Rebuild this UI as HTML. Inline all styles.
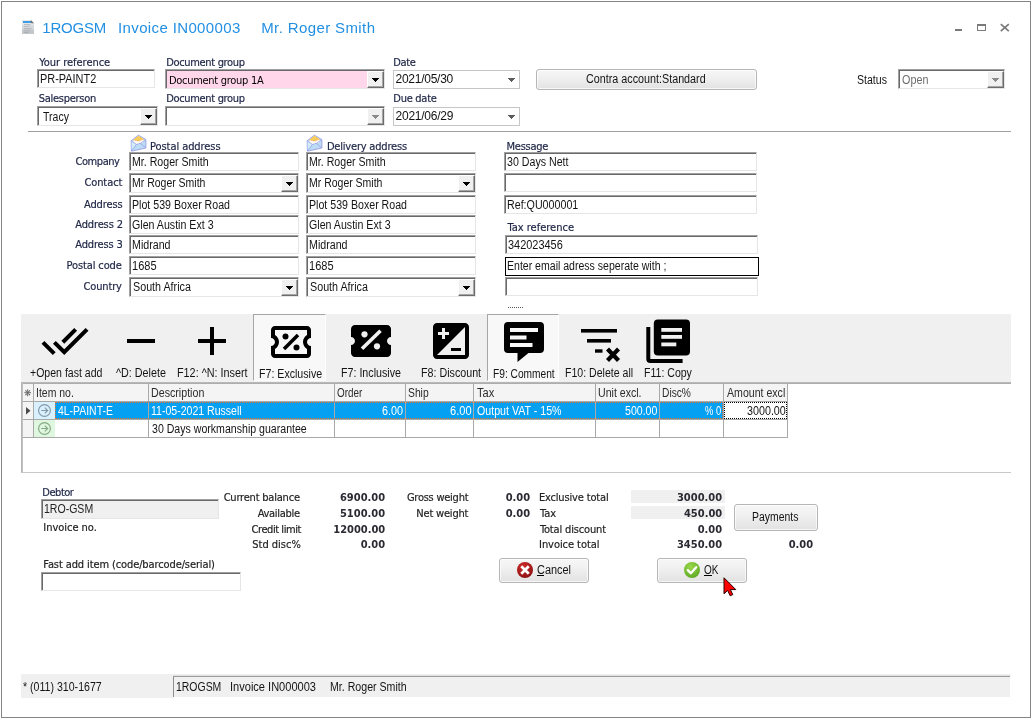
<!DOCTYPE html><html lang="en"><head><meta charset="utf-8"><title>Invoice IN000003</title><style>

html,body{margin:0;padding:0;background:#fff;overflow:hidden}
body{width:1032px;height:719px;position:relative}
.abs,.tx,.ed,.ddb,.dt,.btn{position:absolute}
.win{position:absolute;left:1px;top:1px;width:1030px;height:717px;box-sizing:border-box;border:1px solid #848484;background:#fff}
.tx{white-space:pre;line-height:1;color:#141414}
#txt{position:absolute;left:0;top:0;width:1032px;height:719px;will-change:transform}
.ft{font:11px "DejaVu Sans Condensed","DejaVu Sans","Liberation Sans",sans-serif;-webkit-text-stroke:0.18px currentColor}.fb{font:bold 11px "DejaVu Sans Condensed","DejaVu Sans","Liberation Sans",sans-serif}.fd{font:12px "Liberation Sans",sans-serif}.fv{font:11px "DejaVu Sans Condensed","DejaVu Sans","Liberation Sans",sans-serif}.fm{font:12px "Liberation Sans",sans-serif}.fh{font:15px "Liberation Sans",sans-serif}
.ed{box-sizing:border-box;border-top:1px solid #a0a0a0;border-left:1px solid #a0a0a0;border-right:1px solid #e6e6e6;border-bottom:1px solid #e6e6e6}
.ed:after{content:"";position:absolute;left:0;top:0;right:0;bottom:0;border-top:1px solid #696969;border-left:1px solid #696969}
.ddb{width:17px;box-sizing:border-box;background:#f0f0f0;border-top:1px solid #fff;border-left:1px solid #fff;border-right:1px solid #6c6c6c;border-bottom:1px solid #6c6c6c;box-shadow:inset -1px -1px 0 #a6a6a6}
.ddb i{position:absolute;left:4px;top:50%;margin-top:-2.500px;width:0;height:0;border-left:3.500px solid transparent;border-right:3.500px solid transparent;border-top:4px solid #000}
.dt{box-sizing:border-box;border:1px solid #c6c6c6;background:#fff}
.dt i{position:absolute;right:5px;top:7px;width:0;height:0;border-left:3.500px solid transparent;border-right:3.500px solid transparent;border-top:4px solid #555}
.btn{box-sizing:border-box;border:1px solid #b6b6b6;border-radius:3px;background:linear-gradient(#f7f7f7,#efefef 45%,#e2e2e2);box-shadow:inset 0 0 0 1px rgba(255,255,255,.7)}
.pressed{box-sizing:border-box;background:#f8f8f8;border-top:1px solid #a6a6a6;border-left:1px solid #a6a6a6;border-right:1px solid #fff;border-bottom:1px solid #fff}

</style></head><body>
<div class="win"></div>
<svg class="abs" style="left:22px;top:20px" width="12" height="14" viewBox="0 0 12 14">
<path d="M0 0H9L12 3V14H0Z" fill="#e6e7e8"/><path d="M0 5H12V14H0Z" fill="#d6d8da"/><path d="M0 9.500H12V14H0Z" fill="#c4c7ca"/>
<rect x="1" y="1" width="8.500" height="2" fill="#3d9ee8"/><path d="M8.800 0L12 3.200H9.500L8.800 2.500Z" fill="#6e7276"/>
<rect x="2" y="4.200" width="6.500" height="0.800" fill="#aeb4ba"/><rect x="2" y="6" width="5.500" height="0.800" fill="#b4bac0"/><rect x="2" y="8.300" width="7.500" height="0.900" fill="#a9b0b7"/><rect x="2" y="10.500" width="6" height="0.800" fill="#aab1b8"/><rect x="2" y="12" width="4.500" height="0.800" fill="#a4abb2"/>
</svg>
<div class="abs" style="left:955px;top:29px;width:7px;height:2px;background:#7a7a7a"></div>
<div class="abs" style="left:977px;top:24px;width:9px;height:7px;box-sizing:border-box;border:1px solid #7a7a7a;border-top-width:2px"></div>
<svg class="abs" style="left:1000px;top:23px" width="10" height="9" viewBox="0 0 10 9"><path d="M0.800 1.200L8.800 8.200M8.800 1.200L0.800 8.200" stroke="#7a7a7a" stroke-width="1.700" fill="none"/></svg>
<div class="ed" style="left:37px;top:69px;width:118px;height:19px;background:#fff"></div>
<div class="ed" style="left:165px;top:69px;width:220px;height:20px;background:#ffd6ea"></div>
<div class="ddb" style="left:367px;top:71px;height:17px"><svg width="7" height="4" viewBox="0 0 7 4" shape-rendering="crispEdges" style="position:absolute;left:4px;top:6px"><path d="M0 0h7v1h-1v1h-1v1h-1v1h-1v-1h-1v-1h-1v-1h-1z" fill="#000"/></svg></div>
<div class="dt" style="left:393px;top:70px;width:127px;height:19px"><svg width="7" height="4" viewBox="0 0 7 4" shape-rendering="crispEdges" style="position:absolute;left:114px;top:7px"><path d="M0 0h7v1h-1v1h-1v1h-1v1h-1v-1h-1v-1h-1v-1h-1z" fill="#5c5c5c"/></svg></div>
<div class="btn" style="left:536px;top:69px;width:221px;height:21px"></div>
<div class="ed" style="left:898px;top:69px;width:107px;height:20px;background:#fff"></div>
<div class="ddb" style="left:987px;top:71px;height:17px"><svg width="7" height="4" viewBox="0 0 7 4" shape-rendering="crispEdges" style="position:absolute;left:4px;top:6px"><path d="M0 0h7v1h-1v1h-1v1h-1v1h-1v-1h-1v-1h-1v-1h-1z" fill="#8a8a8a"/></svg></div>
<div class="ed" style="left:37px;top:106px;width:121px;height:20px;background:#fff"></div>
<div class="ddb" style="left:140px;top:108px;height:17px"><svg width="7" height="4" viewBox="0 0 7 4" shape-rendering="crispEdges" style="position:absolute;left:4px;top:6px"><path d="M0 0h7v1h-1v1h-1v1h-1v1h-1v-1h-1v-1h-1v-1h-1z" fill="#000"/></svg></div>
<div class="ed" style="left:165px;top:106px;width:220px;height:20px;background:#fff"></div>
<div class="ddb" style="left:367px;top:108px;height:17px"><svg width="7" height="4" viewBox="0 0 7 4" shape-rendering="crispEdges" style="position:absolute;left:4px;top:6px"><path d="M0 0h7v1h-1v1h-1v1h-1v1h-1v-1h-1v-1h-1v-1h-1z" fill="#8a8a8a"/></svg></div>
<div class="dt" style="left:393px;top:107px;width:127px;height:19px"><svg width="7" height="4" viewBox="0 0 7 4" shape-rendering="crispEdges" style="position:absolute;left:114px;top:7px"><path d="M0 0h7v1h-1v1h-1v1h-1v1h-1v-1h-1v-1h-1v-1h-1z" fill="#5c5c5c"/></svg></div>
<div class="abs" style="left:28px;top:131px;width:983px;height:1px;background:#a0a0a0"></div>
<svg class="abs" style="left:130px;top:134px" width="18" height="19" viewBox="0 0 18 19">
<path d="M1.200 6.700L8.400 1.200L15.900 5.600V14L1.400 17.200Z" fill="#bcdcf6" stroke="#989ce4" stroke-width="0.900" stroke-linejoin="round"/>
<path d="M1.600 7.200L6.400 10.400L1.800 16.500Z" fill="#d3eefa"/><path d="M3.300 6L8.400 1.900L13.900 5.400L13.200 8.500L8 10.200L3.800 9.300Z" fill="#fffdf6"/>
<path d="M3.300 5.900L8.400 1.800L13.900 5.300L8.600 6.900Z" fill="#f7cd58"/>
<path d="M3.300 5.900L8.600 7L13.900 5.300" fill="none" stroke="#f0a060" stroke-width="0.500"/>
<path d="M1.300 7L6.400 10.400L8.300 9.900L10.300 9.300L15.800 5.900M1.600 16.900L6.400 10.400M15.700 13.800L10.300 9.300" stroke="#9aa0e2" stroke-width="0.800" fill="none"/>
</svg>
<svg class="abs" style="left:306px;top:134px" width="18" height="19" viewBox="0 0 18 19">
<path d="M1.200 6.700L8.400 1.200L15.900 5.600V14L1.400 17.200Z" fill="#bcdcf6" stroke="#989ce4" stroke-width="0.900" stroke-linejoin="round"/>
<path d="M1.600 7.200L6.400 10.400L1.800 16.500Z" fill="#d3eefa"/><path d="M3.300 6L8.400 1.900L13.900 5.400L13.200 8.500L8 10.200L3.800 9.300Z" fill="#fffdf6"/>
<path d="M3.300 5.900L8.400 1.800L13.900 5.300L8.600 6.900Z" fill="#f7cd58"/>
<path d="M3.300 5.900L8.600 7L13.900 5.300" fill="none" stroke="#f0a060" stroke-width="0.500"/>
<path d="M1.300 7L6.400 10.400L8.300 9.900L10.300 9.300L15.800 5.900M1.600 16.900L6.400 10.400M15.700 13.800L10.300 9.300" stroke="#9aa0e2" stroke-width="0.800" fill="none"/>
</svg>
<div class="ed" style="left:129px;top:152px;width:170px;height:19px;background:#fff"></div>
<div class="ed" style="left:306px;top:152px;width:170px;height:19px;background:#fff"></div>
<div class="ed" style="left:129px;top:173px;width:170px;height:20px;background:#fff"></div>
<div class="ddb" style="left:281px;top:175px;height:17px"><svg width="7" height="4" viewBox="0 0 7 4" shape-rendering="crispEdges" style="position:absolute;left:4px;top:6px"><path d="M0 0h7v1h-1v1h-1v1h-1v1h-1v-1h-1v-1h-1v-1h-1z" fill="#000"/></svg></div>
<div class="ed" style="left:306px;top:173px;width:170px;height:20px;background:#fff"></div>
<div class="ddb" style="left:458px;top:175px;height:17px"><svg width="7" height="4" viewBox="0 0 7 4" shape-rendering="crispEdges" style="position:absolute;left:4px;top:6px"><path d="M0 0h7v1h-1v1h-1v1h-1v1h-1v-1h-1v-1h-1v-1h-1z" fill="#000"/></svg></div>
<div class="ed" style="left:129px;top:195px;width:170px;height:19px;background:#fff"></div>
<div class="ed" style="left:306px;top:195px;width:170px;height:19px;background:#fff"></div>
<div class="ed" style="left:129px;top:215px;width:170px;height:19px;background:#fff"></div>
<div class="ed" style="left:306px;top:215px;width:170px;height:19px;background:#fff"></div>
<div class="ed" style="left:129px;top:235px;width:170px;height:19px;background:#fff"></div>
<div class="ed" style="left:306px;top:235px;width:170px;height:19px;background:#fff"></div>
<div class="ed" style="left:129px;top:256px;width:170px;height:19px;background:#fff"></div>
<div class="ed" style="left:306px;top:256px;width:170px;height:19px;background:#fff"></div>
<div class="ed" style="left:129px;top:277px;width:170px;height:20px;background:#fff"></div>
<div class="ddb" style="left:281px;top:279px;height:17px"><svg width="7" height="4" viewBox="0 0 7 4" shape-rendering="crispEdges" style="position:absolute;left:4px;top:6px"><path d="M0 0h7v1h-1v1h-1v1h-1v1h-1v-1h-1v-1h-1v-1h-1z" fill="#000"/></svg></div>
<div class="ed" style="left:306px;top:277px;width:170px;height:20px;background:#fff"></div>
<div class="ddb" style="left:458px;top:279px;height:17px"><svg width="7" height="4" viewBox="0 0 7 4" shape-rendering="crispEdges" style="position:absolute;left:4px;top:6px"><path d="M0 0h7v1h-1v1h-1v1h-1v1h-1v-1h-1v-1h-1v-1h-1z" fill="#000"/></svg></div>
<div class="ed" style="left:504px;top:152px;width:253px;height:19px;background:#fff"></div>
<div class="ed" style="left:504px;top:173px;width:253px;height:19px;background:#fff"></div>
<div class="ed" style="left:504px;top:195px;width:253px;height:19px;background:#fff"></div>
<div class="ed" style="left:505px;top:235px;width:253px;height:19px;background:#fff"></div>
<div class="abs" style="left:505px;top:257px;width:254px;height:19px;box-sizing:border-box;border:1px solid #000;background:#fff"></div>
<div class="ed" style="left:505px;top:277px;width:253px;height:19px;background:#fff"></div>
<div class="abs" style="left:508px;top:307px;width:16px;height:1px;background:repeating-linear-gradient(90deg,#555 0 1px,transparent 1px 2px)"></div>
<div class="abs" style="left:21px;top:314px;width:990px;height:69px;background:#f0f0f0"></div>
<div class="abs pressed" style="left:253px;top:314px;width:73px;height:67px"></div>
<div class="abs pressed" style="left:487px;top:314px;width:72px;height:67px"></div>
<svg class="abs" style="left:0;top:0" width="1032" height="400" viewBox="0 0 1032 400">
<g transform="translate(40.7,316.7) scale(2.02)"><path d="M18 7l-1.410-1.410-6.340 6.340 1.410 1.410L18 7zm4.240-1.410L11.660 16.170 7.480 12l-1.410 1.410L11.660 19l12-12-1.420-1.410zM.410 13.410L6 19l1.410-1.410L1.830 12 .410 13.410z" fill="#000"/></g>
<rect x="127" y="339" width="28" height="4" fill="#000"/>
<rect x="198" y="339" width="28" height="4" fill="#000"/><rect x="210" y="327" width="4" height="28" fill="#000"/>
<!-- exclusive (outlined ticket) -->
<g transform="translate(267,318)">
<path d="M44 20V12c0-2.2-1.8-4-4-4H8c-2.2 0-4 1.8-4 4v8c2.2 0 4 1.8 4 4s-1.8 4-4 4v8c0 2.2 1.8 4 4 4h32c2.200 0 4-1.800 4-4v-8c-2.200 0-4-1.800-4-4s1.800-4 4-4z" fill="#000"/>
<path d="M40 17.100V12H8v5.100c2.400 1.400 4 4 4 6.900s-1.600 5.500-4 6.900V36h32v-5.100c-2.400-1.400-4-4-4-6.900s1.600-5.500 4-6.900z" fill="#f8f8f8"/>
<circle cx="18.500" cy="18.500" r="3" fill="#000"/><circle cx="29.500" cy="29.500" r="3" fill="#000"/>
<path d="M17 31L31 17" stroke="#000" stroke-width="3.6"/>
</g>
<!-- inclusive (filled ticket) -->
<g transform="translate(347,317)">
<path d="M44 20V12c0-2.200-1.800-4-4-4H8c-2.200 0-4 1.800-4 4v8c2.200 0 4 1.800 4 4s-1.800 4-4 4v8c0 2.200 1.800 4 4 4h32c2.200 0 4-1.800 4-4v-8c-2.200 0-4-1.800-4-4s1.800-4 4-4z" fill="#000"/>
<circle cx="17.500" cy="17.300" r="3.100" fill="#f0f0f0"/><circle cx="30" cy="29.300" r="3.100" fill="#f0f0f0"/>
<path d="M15 31.800L33.500 13.700" stroke="#f0f0f0" stroke-width="3.600"/>
</g>
<!-- discount (iso) -->
<g transform="translate(427,317) scale(2)">
<path d="M19 3H5c-1.100 0-2 .900-2 2v14c0 1.100.900 2 2 2h14c1.100 0 2-.900 2-2V5c0-1.100-.900-2-2-2zM5.500 7.500h2v-2H9v2h2V9H9v2H7.500V9h-2V7.500zM19 19H5L19 5v14zm-2-2v-1.500h-5V17h5z" fill="#000"/>
</g>
<!-- comment -->
<g transform="translate(1,1)">
<path d="M507 321h32a4 4 0 0 1 4 4v23a4 4 0 0 1-4 4h-11.500l-11 9v-9H507a4 4 0 0 1-4-4v-23a4 4 0 0 1 4-4z" fill="#000"/>
<rect x="509" y="327" width="28" height="4" fill="#f8f8f8"/><rect x="509" y="334.500" width="16.500" height="4" fill="#f8f8f8"/><rect x="509" y="342" width="22.500" height="4" fill="#f8f8f8"/>
</g>
<!-- delete all -->
<rect x="581" y="329" width="36" height="3.600" fill="#000"/><rect x="587" y="339" width="24" height="3.600" fill="#000"/><rect x="595" y="349.300" width="7.500" height="3.400" fill="#000"/>
<path d="M607.500 349L618.500 360.500M618.500 349L607.500 360.500" stroke="#000" stroke-width="4.200" fill="none"/>
<!-- copy -->
<path d="M646.300 327h4v32h32.300v4H650.300a4 4 0 0 1-4-4z" fill="#000"/>
<rect x="653.800" y="319.500" width="36.200" height="36" rx="4" fill="#000"/>
<rect x="661.300" y="328" width="20.700" height="3.800" fill="#f0f0f0"/><rect x="661.300" y="335" width="20.700" height="3.800" fill="#f0f0f0"/><rect x="661.300" y="342.500" width="15" height="3.800" fill="#f0f0f0"/>
</svg>
<div class="abs" style="left:21px;top:382px;width:990px;height:91px;box-sizing:border-box;border-top:1px solid #b8b8b8;border-left:1px solid #b4b4b4;border-bottom:1px solid #c8c8c8;background:#fff"></div>
<div class="abs" style="left:22px;top:383px;width:989px;height:1px;background:#adadad"></div>
<div class="abs" style="left:22px;top:383px;width:1px;height:89px;background:#c0c0c0"></div>
<div class="abs" style="left:23px;top:384px;width:765px;height:17px;background:#f4f4f4"></div>
<div class="abs" style="left:23px;top:401px;width:11px;height:36px;background:#f4f4f4"></div>
<div class="abs" style="left:33px;top:384px;width:1px;height:54px;background:#a9a9a9"></div>
<div class="abs" style="left:148px;top:384px;width:1px;height:54px;background:#a9a9a9"></div>
<div class="abs" style="left:334px;top:384px;width:1px;height:54px;background:#a9a9a9"></div>
<div class="abs" style="left:405px;top:384px;width:1px;height:54px;background:#a9a9a9"></div>
<div class="abs" style="left:473px;top:384px;width:1px;height:54px;background:#a9a9a9"></div>
<div class="abs" style="left:595px;top:384px;width:1px;height:54px;background:#a9a9a9"></div>
<div class="abs" style="left:659px;top:384px;width:1px;height:54px;background:#a9a9a9"></div>
<div class="abs" style="left:723px;top:384px;width:1px;height:54px;background:#a9a9a9"></div>
<div class="abs" style="left:787px;top:384px;width:1px;height:54px;background:#a9a9a9"></div>
<div class="abs" style="left:23px;top:401px;width:765px;height:1px;background:#a9a9a9"></div>
<div class="abs" style="left:23px;top:419px;width:765px;height:1px;background:#a9a9a9"></div>
<div class="abs" style="left:23px;top:437px;width:765px;height:1px;background:#a9a9a9"></div>
<div class="abs" style="left:34px;top:402px;width:21px;height:17px;background:#d9f0ff"></div>
<div class="abs" style="left:34px;top:420px;width:21px;height:17px;background:#dff7df"></div>
<div class="abs" style="left:55px;top:402px;width:93px;height:17px;background:#06a0f3"></div>
<div class="abs" style="left:149px;top:402px;width:185px;height:17px;background:#06a0f3"></div>
<div class="abs" style="left:335px;top:402px;width:70px;height:17px;background:#06a0f3"></div>
<div class="abs" style="left:406px;top:402px;width:67px;height:17px;background:#06a0f3"></div>
<div class="abs" style="left:474px;top:402px;width:121px;height:17px;background:#06a0f3"></div>
<div class="abs" style="left:596px;top:402px;width:63px;height:17px;background:#06a0f3"></div>
<div class="abs" style="left:660px;top:402px;width:63px;height:17px;background:#06a0f3"></div>
<div class="abs" style="left:55px;top:402px;width:668px;height:17px;box-sizing:border-box;border:1px dotted #e8712a;pointer-events:none"></div>
<div class="abs" style="left:724px;top:402px;width:63px;height:17px;box-sizing:border-box;border:1px dotted #000"></div>
<svg class="abs" style="left:26px;top:407px" width="5" height="8" viewBox="0 0 5 8"><path d="M0 0L4.500 3.800L0 7.600Z" fill="#4a4a4a"/></svg>
<svg class="abs" style="left:38px;top:404px" width="13" height="13" viewBox="0 0 13 13"><circle cx="6.500" cy="6.500" r="5.900" fill="none" stroke="#8497a6" stroke-width="1.150"/><path d="M3.300 6.500H9.500M6.800 3.600L9.700 6.500L6.800 9.400" fill="none" stroke="#8497a6" stroke-width="1.150"/></svg>
<svg class="abs" style="left:38px;top:422px" width="13" height="13" viewBox="0 0 13 13"><circle cx="6.500" cy="6.500" r="5.900" fill="none" stroke="#86a886" stroke-width="1.150"/><path d="M3.300 6.500H9.500M6.800 3.600L9.700 6.500L6.800 9.400" fill="none" stroke="#86a886" stroke-width="1.150"/></svg>
<div class="ed" style="left:41px;top:499px;width:178px;height:20px;background:#f0f0f0"></div>
<div class="ed" style="left:41px;top:572px;width:200px;height:19px;background:#fff"></div>
<div class="abs" style="left:631px;top:490px;width:94px;height:13px;background:#f0f0f0"></div>
<div class="abs" style="left:631px;top:506px;width:94px;height:13px;background:#f0f0f0"></div>
<div class="btn" style="left:734px;top:504px;width:84px;height:27px"></div>
<div class="btn" style="left:499px;top:558px;width:90px;height:25px"></div>
<div class="btn" style="left:657px;top:558px;width:90px;height:25px"></div>
<div class="abs" style="left:517px;top:562px;width:16px;height:16px;border-radius:50%;background:radial-gradient(circle at 40% 30%,#d02a2a,#7c0b0e)"></div>
<svg class="abs" style="left:516px;top:561px" width="18" height="18" viewBox="0 0 18 18"><path d="M6.200 6.200L11.800 11.800M11.800 6.200L6.200 11.800" stroke="#fff" stroke-width="2.700" stroke-linecap="square"/></svg>
<div class="abs" style="left:684px;top:562px;width:16px;height:16px;border-radius:50%;background:radial-gradient(circle at 40% 30%,#9ad84a,#4e9d1c)"></div>
<svg class="abs" style="left:683px;top:561px" width="18" height="18" viewBox="0 0 18 18"><path d="M4.800 9.200L7.800 12.200L13.200 6.200" stroke="#fff" stroke-width="2.400" fill="none" stroke-linecap="round" stroke-linejoin="round"/></svg>
<div class="abs" style="left:537px;top:575px;width:7px;height:1px;background:#000"></div>
<div class="abs" style="left:704px;top:575px;width:8px;height:1px;background:#000"></div>
<svg class="abs" style="left:723px;top:577px" width="14" height="21" viewBox="0 0 14 21"><path d="M1 0.800V16.800L4.600 13.400L7.200 18.800L9.800 17.600L7.300 12.600H12.800Z" fill="#f00" stroke="#2a0000" stroke-width="1" stroke-linejoin="round"/></svg>
<div class="abs" style="left:21px;top:674px;width:990px;height:2px;background:#f0f0f0"></div>
<div class="abs" style="left:21px;top:674px;width:152px;height:24px;background:#f0f0f0"></div>
<div class="abs" style="left:173px;top:675px;width:837px;height:1px;background:#e2e2e2"></div>
<div class="abs" style="left:173px;top:676px;width:837px;height:21px;box-sizing:border-box;border-top:1px solid #9c9c9c;border-left:1px solid #8e8e8e;background:#f0f0f0"></div>
<div id="txt">
<span id="t0" class="tx fh" style="top:19.00px;left:42.32px;letter-spacing:-0.227px;color:#2390e2;">1ROGSM</span>
<span id="t1" class="tx fh" style="top:19.00px;left:118.06px;letter-spacing:0.366px;color:#2390e2;">Invoice IN000003</span>
<span id="t2" class="tx fh" style="top:19.00px;left:261.21px;letter-spacing:0.387px;color:#2390e2;">Mr. Roger Smith</span>
<span id="t3" class="tx ft" style="top:56.00px;left:39.19px;letter-spacing:-0.023px;color:#212847;">Your reference</span>
<span id="t4" class="tx ft" style="top:56.00px;left:166.22px;letter-spacing:-0.331px;color:#212847;">Document group</span>
<span id="t5" class="tx ft" style="top:56.00px;left:393.27px;letter-spacing:-0.351px;color:#212847;">Date</span>
<span id="t6" class="tx fm" style="top:72.00px;left:39.85px;transform:scaleX(0.9104);transform-origin:left top;">PR-PAINT2</span>
<span id="t7" class="tx fv" style="top:74.00px;left:168.95px;letter-spacing:-0.289px;color:#000;">Document group 1A</span>
<span id="t8" class="tx fd" style="top:72.00px;left:395.51px;letter-spacing:-0.254px;color:#111;">2021/05/30</span>
<span id="t9" class="tx fm" style="top:72.00px;left:586.44px;transform:scaleX(0.8969);transform-origin:left top;">Contra account:Standard</span>
<span id="t10" class="tx fm" style="top:73.00px;left:856.95px;transform:scaleX(0.8798);transform-origin:left top;">Status</span>
<span id="t11" class="tx fm" style="top:73.00px;left:901.96px;transform:scaleX(0.8986);transform-origin:left top;color:#6d6d6d;">Open</span>
<span id="t12" class="tx ft" style="top:92.00px;left:38.81px;letter-spacing:-0.281px;color:#212847;">Salesperson</span>
<span id="t13" class="tx ft" style="top:92.00px;left:166.22px;letter-spacing:-0.331px;color:#212847;">Document group</span>
<span id="t14" class="tx ft" style="top:92.00px;left:393.34px;letter-spacing:-0.275px;color:#212847;">Due date</span>
<span id="t15" class="tx fm" style="top:110.00px;left:42.53px;transform:scaleX(0.8760);transform-origin:left top;">Tracy</span>
<span id="t16" class="tx fd" style="top:109.00px;left:395.51px;letter-spacing:-0.232px;color:#111;">2021/06/29</span>
<span id="t17" class="tx ft" style="top:140.00px;left:150.05px;letter-spacing:-0.071px;color:#212847;">Postal address</span>
<span id="t18" class="tx ft" style="top:140.00px;left:326.90px;letter-spacing:-0.193px;color:#212847;">Delivery address</span>
<span id="t19" class="tx ft" style="top:140.00px;left:506.62px;letter-spacing:-0.279px;color:#212847;">Message</span>
<span id="t20" class="tx ft" style="top:155.00px;left:75.51px;letter-spacing:-0.436px;color:#212847;">Company</span>
<span id="t21" class="tx fm" style="top:155.00px;left:132.05px;transform:scaleX(0.8840);transform-origin:left top;">Mr. Roger Smith</span>
<span id="t22" class="tx fm" style="top:155.00px;left:309.05px;transform:scaleX(0.8840);transform-origin:left top;">Mr. Roger Smith</span>
<span id="t23" class="tx ft" style="top:176.00px;left:84.40px;letter-spacing:-0.089px;color:#212847;">Contact</span>
<span id="t24" class="tx fm" style="top:176.00px;left:132.20px;transform:scaleX(0.8738);transform-origin:left top;">Mr Roger Smith</span>
<span id="t25" class="tx fm" style="top:176.00px;left:309.20px;transform:scaleX(0.8738);transform-origin:left top;">Mr Roger Smith</span>
<span id="t26" class="tx ft" style="top:198.00px;left:83.95px;letter-spacing:-0.108px;color:#212847;">Address</span>
<span id="t27" class="tx fm" style="top:198.00px;left:132.20px;transform:scaleX(0.8850);transform-origin:left top;">Plot 539 Boxer Road</span>
<span id="t28" class="tx fm" style="top:198.00px;left:309.20px;transform:scaleX(0.8850);transform-origin:left top;">Plot 539 Boxer Road</span>
<span id="t29" class="tx ft" style="top:218.00px;left:75.26px;letter-spacing:-0.138px;color:#212847;">Address 2</span>
<span id="t30" class="tx fm" style="top:218.00px;left:131.84px;transform:scaleX(0.8858);transform-origin:left top;">Glen Austin Ext 3</span>
<span id="t31" class="tx fm" style="top:218.00px;left:308.84px;transform:scaleX(0.8858);transform-origin:left top;">Glen Austin Ext 3</span>
<span id="t32" class="tx ft" style="top:238.00px;left:75.29px;letter-spacing:-0.175px;color:#212847;">Address 3</span>
<span id="t33" class="tx fm" style="top:238.00px;left:131.69px;transform:scaleX(0.8882);transform-origin:left top;">Midrand</span>
<span id="t34" class="tx fm" style="top:238.00px;left:308.69px;transform:scaleX(0.8882);transform-origin:left top;">Midrand</span>
<span id="t35" class="tx ft" style="top:259.00px;left:66.62px;letter-spacing:-0.123px;color:#212847;">Postal code</span>
<span id="t36" class="tx fm" style="top:259.00px;left:131.57px;transform:scaleX(0.9185);transform-origin:left top;">1685</span>
<span id="t37" class="tx fm" style="top:259.00px;left:308.57px;transform:scaleX(0.9185);transform-origin:left top;">1685</span>
<span id="t38" class="tx ft" style="top:280.00px;left:83.51px;letter-spacing:-0.139px;color:#212847;">Country</span>
<span id="t39" class="tx fm" style="top:280.00px;left:132.91px;transform:scaleX(0.8943);transform-origin:left top;">South Africa</span>
<span id="t40" class="tx fm" style="top:280.00px;left:309.91px;transform:scaleX(0.8943);transform-origin:left top;">South Africa</span>
<span id="t41" class="tx fm" style="top:155.00px;left:506.99px;transform:scaleX(0.8867);transform-origin:left top;">30 Days Nett</span>
<span id="t42" class="tx fm" style="top:198.00px;left:506.50px;transform:scaleX(0.8902);transform-origin:left top;">Ref:QU000001</span>
<span id="t43" class="tx ft" style="top:221.00px;left:507.44px;letter-spacing:0.006px;color:#212847;">Tax reference</span>
<span id="t44" class="tx fm" style="top:238.00px;left:507.57px;transform:scaleX(0.9113);transform-origin:left top;">342023456</span>
<span id="t45" class="tx fm" style="top:259.00px;left:506.64px;transform:scaleX(0.8784);transform-origin:left top;">Enter email adress seperate with ;</span>
<span id="t46" class="tx fm" style="top:366.00px;left:29.89px;transform:scaleX(0.8794);transform-origin:left top;">+Open fast add</span>
<span id="t47" class="tx fm" style="top:366.00px;left:116.23px;transform:scaleX(0.8980);transform-origin:left top;">^D: Delete</span>
<span id="t48" class="tx fm" style="top:366.00px;left:177.05px;transform:scaleX(0.9015);transform-origin:left top;">F12: ^N: Insert</span>
<span id="t49" class="tx fm" style="top:367.00px;left:258.96px;transform:scaleX(0.8854);transform-origin:left top;">F7: Exclusive</span>
<span id="t50" class="tx fm" style="top:366.00px;left:341.26px;transform:scaleX(0.8904);transform-origin:left top;">F7: Inclusive</span>
<span id="t51" class="tx fm" style="top:366.00px;left:421.10px;transform:scaleX(0.8915);transform-origin:left top;">F8: Discount</span>
<span id="t52" class="tx fm" style="top:367.00px;left:493.01px;transform:scaleX(0.8486);transform-origin:left top;">F9: Comment</span>
<span id="t53" class="tx fm" style="top:366.00px;left:565.34px;transform:scaleX(0.8809);transform-origin:left top;">F10: Delete all</span>
<span id="t54" class="tx fm" style="top:366.00px;left:643.87px;transform:scaleX(0.8794);transform-origin:left top;">F11: Copy</span>
<span id="t55" class="tx fm" style="top:388.00px;left:23.77px;transform:scaleX(0.9783);transform-origin:left top;color:#555;font-size:9px;">❋</span>
<span id="t56" class="tx fm" style="top:386.00px;left:35.95px;transform:scaleX(0.8719);transform-origin:left top;color:#2b2b2b;">Item no.</span>
<span id="t57" class="tx fm" style="top:386.00px;left:151.25px;transform:scaleX(0.8887);transform-origin:left top;color:#2b2b2b;">Description</span>
<span id="t58" class="tx fm" style="top:386.00px;left:337.32px;transform:scaleX(0.8220);transform-origin:left top;color:#2b2b2b;">Order</span>
<span id="t59" class="tx fm" style="top:386.00px;left:408.34px;transform:scaleX(0.8598);transform-origin:left top;color:#2b2b2b;">Ship</span>
<span id="t60" class="tx fm" style="top:386.00px;left:477.40px;transform:scaleX(0.9231);transform-origin:left top;color:#2b2b2b;">Tax</span>
<span id="t61" class="tx fm" style="top:386.00px;left:597.91px;transform:scaleX(0.8824);transform-origin:left top;color:#2b2b2b;">Unit excl.</span>
<span id="t62" class="tx fm" style="top:386.00px;left:662.20px;transform:scaleX(0.8516);transform-origin:left top;color:#2b2b2b;">Disc%</span>
<span id="t63" class="tx fm" style="top:386.00px;left:726.77px;transform:scaleX(0.8820);transform-origin:left top;color:#2b2b2b;">Amount excl</span>
<span id="t64" class="tx fm" style="top:404.00px;left:58.19px;transform:scaleX(0.8695);transform-origin:left top;color:#fff;">4L-PAINT-E</span>
<span id="t65" class="tx fm" style="top:404.00px;left:151.17px;transform:scaleX(0.8787);transform-origin:left top;color:#fff;">11-05-2021 Russell</span>
<span id="t66" class="tx fm" style="top:404.00px;left:382.18px;transform:scaleX(0.9005);transform-origin:left top;color:#fff;">6.00</span>
<span id="t67" class="tx fm" style="top:404.00px;left:449.52px;transform:scaleX(0.9219);transform-origin:left top;color:#fff;">6.00</span>
<span id="t68" class="tx fm" style="top:404.00px;left:476.68px;transform:scaleX(0.8865);transform-origin:left top;color:#fff;">Output VAT - 15%</span>
<span id="t69" class="tx fm" style="top:404.00px;left:624.75px;transform:scaleX(0.8823);transform-origin:left top;color:#fff;">500.00</span>
<span id="t70" class="tx fm" style="top:404.00px;left:705.15px;transform:scaleX(0.7779);transform-origin:left top;color:#fff;">% 0</span>
<span id="t71" class="tx fm" style="top:404.00px;left:746.58px;transform:scaleX(0.8948);transform-origin:left top;">3000.00</span>
<span id="t72" class="tx fm" style="top:422.00px;left:151.98px;transform:scaleX(0.8821);transform-origin:left top;">30 Days workmanship guarantee</span>
<span id="t73" class="tx ft" style="top:486.00px;left:42.35px;letter-spacing:-0.488px;color:#212847;">Debtor</span>
<span id="t74" class="tx fm" style="top:502.00px;left:43.60px;transform:scaleX(0.8781);transform-origin:left top;color:#222;">1RO-GSM</span>
<span id="t75" class="tx ft" style="top:521.00px;left:43.26px;letter-spacing:-0.026px;color:#222;">Invoice no.</span>
<span id="t76" class="tx ft" style="top:558.00px;left:43.34px;letter-spacing:-0.111px;color:#222;">Fast add item (code/barcode/serial)</span>
<span id="t77" class="tx ft" style="top:491.00px;left:223.67px;letter-spacing:-0.207px;color:#222;">Current balance</span>
<span id="t78" class="tx ft" style="top:507.00px;left:257.69px;letter-spacing:-0.297px;color:#222;">Available</span>
<span id="t79" class="tx ft" style="top:523.00px;left:251.53px;letter-spacing:-0.436px;color:#222;">Credit limit</span>
<span id="t80" class="tx ft" style="top:538.00px;left:252.26px;letter-spacing:-0.007px;color:#222;">Std disc%</span>
<span id="t81" class="tx fb" style="top:491.00px;left:339.98px;letter-spacing:0.000px;color:#2a2a33;">6900.00</span>
<span id="t82" class="tx fb" style="top:507.00px;left:339.98px;letter-spacing:0.000px;color:#2a2a33;">5100.00</span>
<span id="t83" class="tx fb" style="top:523.00px;left:333.25px;letter-spacing:0.000px;color:#2a2a33;">12000.00</span>
<span id="t84" class="tx fb" style="top:538.00px;left:360.70px;letter-spacing:0.000px;color:#2a2a33;">0.00</span>
<span id="t85" class="tx ft" style="top:491.00px;left:406.91px;letter-spacing:-0.247px;color:#222;">Gross weight</span>
<span id="t86" class="tx ft" style="top:507.00px;left:416.34px;letter-spacing:-0.199px;color:#222;">Net weight</span>
<span id="t87" class="tx fb" style="top:491.00px;left:505.70px;letter-spacing:0.000px;color:#2a2a33;">0.00</span>
<span id="t88" class="tx fb" style="top:507.00px;left:505.70px;letter-spacing:0.000px;color:#2a2a33;">0.00</span>
<span id="t89" class="tx ft" style="top:491.00px;left:538.90px;letter-spacing:-0.155px;color:#222;">Exclusive total</span>
<span id="t90" class="tx ft" style="top:507.00px;left:540.09px;letter-spacing:0.000px;color:#222;">Tax</span>
<span id="t91" class="tx ft" style="top:523.00px;left:539.94px;letter-spacing:-0.154px;color:#222;">Total discount</span>
<span id="t92" class="tx ft" style="top:538.00px;left:539.04px;letter-spacing:-0.055px;color:#222;">Invoice total</span>
<span id="t93" class="tx fb" style="top:491.00px;left:676.98px;letter-spacing:0.000px;color:#2a2a33;">3000.00</span>
<span id="t94" class="tx fb" style="top:507.00px;left:683.98px;letter-spacing:0.000px;color:#2a2a33;">450.00</span>
<span id="t95" class="tx fb" style="top:523.00px;left:697.70px;letter-spacing:0.000px;color:#2a2a33;">0.00</span>
<span id="t96" class="tx fb" style="top:538.00px;left:676.98px;letter-spacing:0.000px;color:#2a2a33;">3450.00</span>
<span id="t97" class="tx fb" style="top:538.00px;left:788.70px;letter-spacing:0.000px;color:#2a2a33;">0.00</span>
<span id="t98" class="tx fm" style="top:510.00px;left:752.20px;transform:scaleX(0.8705);transform-origin:left top;">Payments</span>
<span id="t99" class="tx fm" style="top:563.00px;left:536.98px;transform:scaleX(0.9102);transform-origin:left top;">Cancel</span>
<span id="t100" class="tx fm" style="top:563.00px;left:703.89px;transform:scaleX(0.8307);transform-origin:left top;">OK</span>
<span id="t101" class="tx fm" style="top:680.00px;left:23.45px;transform:scaleX(0.8824);transform-origin:left top;">* (011) 310-1677</span>
<span id="t102" class="tx fm" style="top:680.00px;left:175.75px;transform:scaleX(0.8713);transform-origin:left top;">1ROGSM</span>
<span id="t103" class="tx fm" style="top:680.00px;left:229.96px;transform:scaleX(0.9205);transform-origin:left top;">Invoice IN000003</span>
<span id="t104" class="tx fm" style="top:680.00px;left:329.95px;transform:scaleX(0.8838);transform-origin:left top;">Mr. Roger Smith</span>
</div></body></html>
